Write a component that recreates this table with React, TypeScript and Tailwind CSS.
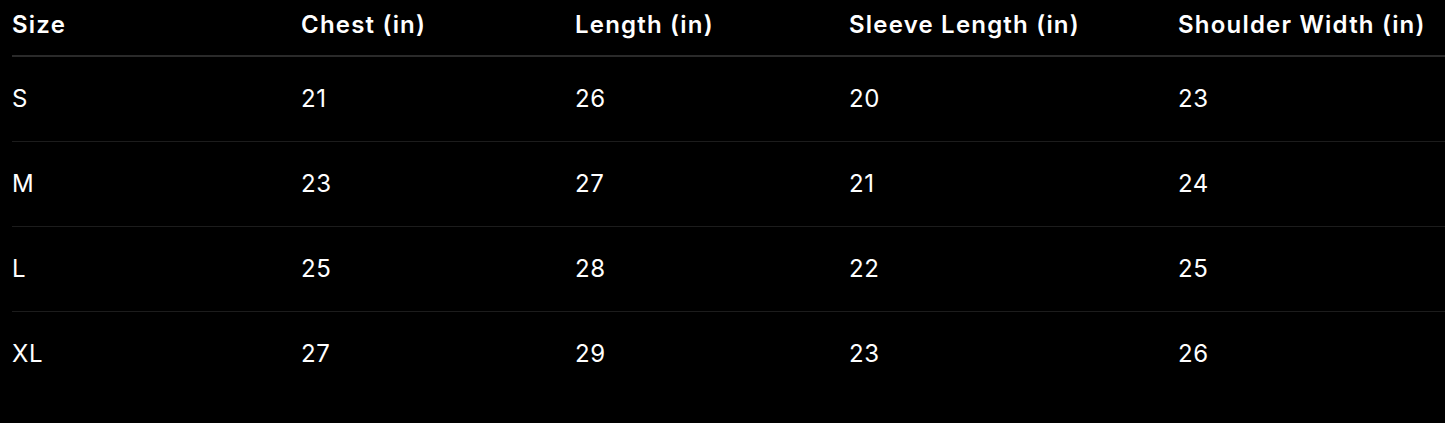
const headers = ["Size", "Chest (in)", "Length (in)", "Sleeve Length (in)", "Shoulder Width (in)"];

const rows = [
  ["S", "21", "26", "20", "23"],
  ["M", "23", "27", "21", "24"],
  ["L", "25", "28", "22", "25"],
  ["XL", "27", "29", "23", "26"],
];

const widths = ["w-[289px]", "w-[274px]", "w-[274px]", "w-[329px]", ""];

export default function App() {
  return (
    <div className="min-h-screen w-full bg-black pl-3 font-['Inter','Liberation_Sans',sans-serif] text-white">
      <table className="w-full table-fixed border-collapse text-left">
        <thead>
          <tr className="h-[56px] border-b-2 border-[#2a2a2a]">
            {headers.map((h, i) => (
              <th
                key={h}
                className={`${widths[i]} whitespace-nowrap pb-[5px] text-[24px] font-semibold tracking-[1.2px]`}
              >
                {h}
              </th>
            ))}
          </tr>
        </thead>
        <tbody>
          {rows.map((r, ri) => (
            <tr
              key={r[0]}
              className={ri < rows.length - 1 ? "h-[85px] border-b border-[#1c1c1c]" : "h-[85px]"}
            >
              {r.map((c, ci) => (
                <td key={ci} className="text-[24px] font-normal tracking-[0.6px]">
                  {c}
                </td>
              ))}
            </tr>
          ))}
        </tbody>
      </table>
    </div>
  );
}
